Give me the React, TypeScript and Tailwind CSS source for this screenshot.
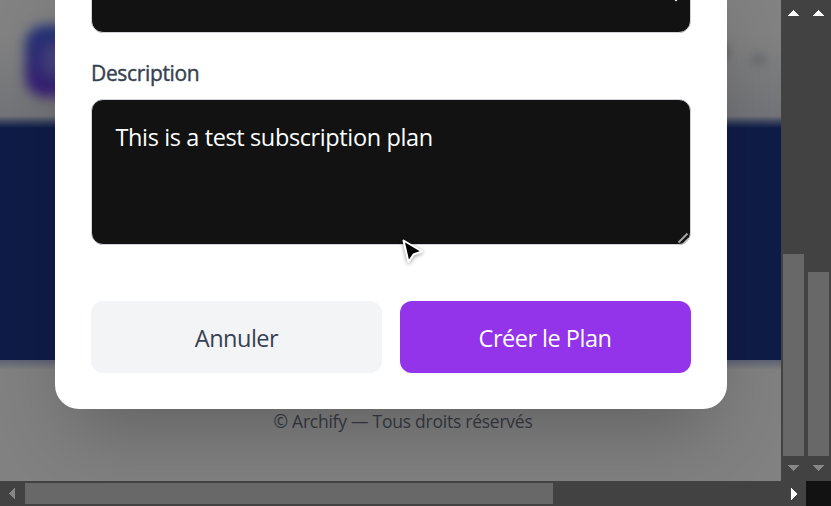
import React from "react";

function Arrow({ points, color, className }: { points: string; color: string; className: string }) {
  return (
    <svg className={className} shapeRendering="crispEdges">
      <polygon points={points} fill={color} />
    </svg>
  );
}

function VerticalBar({ thumb }: { thumb: string }) {
  return (
    <div className="flex w-[25px] flex-col items-center bg-[#424242]">
      <Arrow className="mt-[10px] h-[6px] w-[11px] shrink-0" points="5.5,0 11,6 0,6" color="#ffffff" />
      <div className="flex-1" />
      <div className={`w-[21px] shrink-0 bg-[#686868] ${thumb}`} />
      <Arrow className="mt-[9px] mb-[10px] h-[6px] w-[11px] shrink-0" points="0,0 11,0 5.5,6" color="#868686" />
    </div>
  );
}

function Page() {
  return (
    <div className="flex h-[481px] w-[781px] flex-col bg-[#818181]">
      <header className="relative h-[116px] shrink-0 overflow-hidden bg-linear-to-b from-[#828282] from-30% to-[#737478]">
        <div className="absolute top-[25px] left-[25px] size-[72px] rounded-[20px] bg-linear-to-b from-[#213579] to-[#3b1f75] blur-[6px]" />
        <div className="absolute top-[42px] left-[42px] size-[36px] rounded-full bg-[#484480] blur-[7px]" />
        <div className="absolute top-[43px] left-[714px] h-[18px] w-[14px] rounded-full bg-[#5c5c5e] blur-[5px]" />
        <div className="absolute top-[55px] left-[751px] h-[10px] w-[15px] rounded-full bg-[#68696c] blur-[5px]" />
      </header>
      <main className="relative h-[244px] shrink-0 bg-[#0f1c47]">
        <div className="h-[12px] bg-linear-to-b from-[#737478] via-[#3a425d] to-[#0f1c47]" />
        <div className="absolute top-[244px] left-0 h-[10px] w-full bg-linear-to-b from-[#5c6074] to-transparent" />
      </main>
      <footer className="flex flex-1 justify-center pt-[48px] font-['Open_Sans','Noto_Sans',sans-serif] text-[17.5px] leading-[27px] tracking-[-0.25px] text-[#373b43]">
        <span className="ml-[25px] whitespace-nowrap">© Archify — Tous droits réservés</span>
      </footer>
    </div>
  );
}

function PlanDialog() {
  return (
    <div className="absolute -top-[40px] left-[55px] flex h-[449px] w-[672px] flex-col rounded-b-3xl bg-white px-9 pb-9 font-['Open_Sans','Noto_Sans',sans-serif] shadow-[0_37px_75px_-18px_rgba(0,0,0,0.25)]">
      <div className="relative h-[73px] shrink-0 rounded-xl border border-[#d1d5db] bg-[#121212]">
        <svg className="absolute top-[32px] right-[8px] h-[9px] w-[12px]" fill="none" stroke="#fff" strokeWidth="2">
          <path d="M1 2 6 7l5-5" />
        </svg>
      </div>
      <label className="mt-[27px] h-[27px] text-[21px] leading-[27px] font-medium tracking-[-0.35px] text-[#374151] [-webkit-text-stroke:0.4px_#374151]">
        <span>Description</span>
      </label>
      <div className="relative mt-[12px] h-[146px] shrink-0 rounded-xl border border-[#d1d5db] bg-[#121212] pt-[19px] pr-6 pl-[23.5px] text-[23.5px] leading-9 tracking-[-0.38px] text-white">
        <span className="whitespace-nowrap">This is a test subscription plan</span>
        <svg className="absolute right-0 bottom-0 h-[12px] w-[13px]" fill="none">
          <path d="M1.5 10.5 10.5 1.5" stroke="#a5a5a0" strokeWidth="2" />
          <path d="M6.5 11.5 12 6" stroke="#c8c8c8" strokeWidth="1.5" />
        </svg>
      </div>
      <div className="mt-auto grid h-[72px] shrink-0 grid-cols-2 gap-[18px] text-[23.5px] leading-9 tracking-[-0.5px]">
        <button className="rounded-xl bg-[#f3f4f6] pt-px text-[#374151]"><span>Annuler</span></button>
        <button className="rounded-xl bg-[#9333ea] pt-px pr-px text-white"><span>Créer le Plan</span></button>
      </div>
    </div>
  );
}

export default function App() {
  return (
    <div className="flex h-[506px] w-[831px] overflow-hidden bg-[#121212]">
      <div className="flex w-[806px] flex-col">
        <div className="flex h-[481px]">
          <div className="relative h-[481px] w-[781px] overflow-hidden">
            <Page />
            <PlanDialog />
            <svg className="absolute top-[236px] left-[399px] h-[32px] w-[28px] drop-shadow-[0px_1px_2px_rgba(0,0,0,0.4)]">
              <path d="M4.5 4.5 9.5 26 14.5 18.5 23 15.5Z" fill="#000" stroke="#fff" strokeWidth="2" strokeLinejoin="round" />
            </svg>
          </div>
          <VerticalBar thumb="h-[202px]" />
        </div>
        <div className="flex h-[25px] items-center bg-[#424242]">
          <Arrow className="ml-[9px] h-[11px] w-[6px]" points="6,0 6,11 0,5.5" color="#868686" />
          <div className="ml-[10px] h-[21px] w-[528px] bg-[#686868]" />
          <Arrow className="mr-[9px] ml-auto h-[12px] w-[6px]" points="0,0 6,6 0,12" color="#ffffff" />
        </div>
      </div>
      <div className="flex h-[481px]">
        <VerticalBar thumb="h-[184px]" />
      </div>
    </div>
  );
}
